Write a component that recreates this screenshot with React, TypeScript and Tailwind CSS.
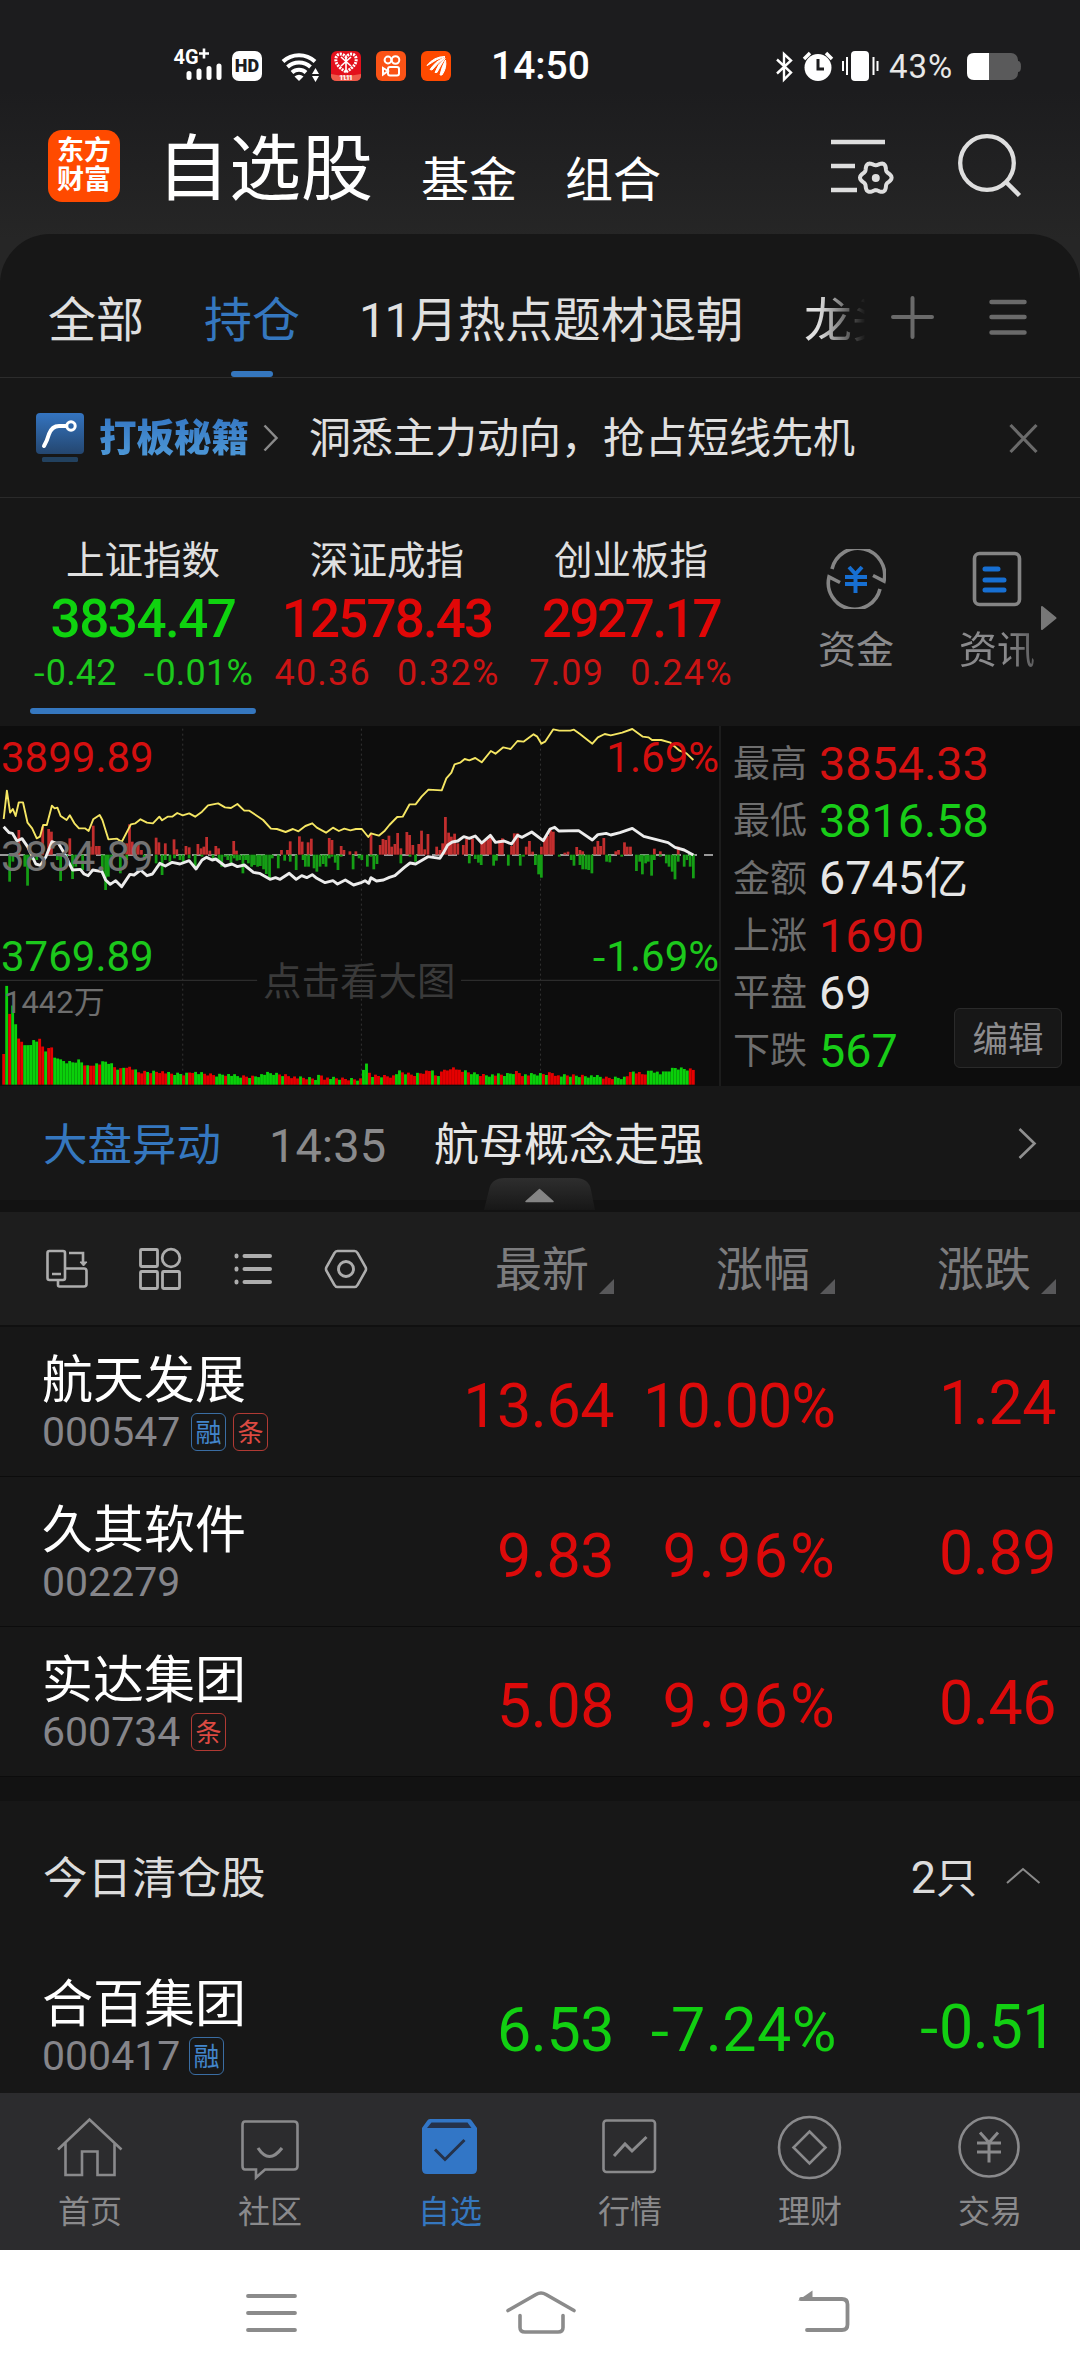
import React from 'react';

type Box = { x: number; y: number; w: number; h: number; className?: string; children: React.ReactNode };

/* Icon canvas: children are drawn in page units, offset by the box origin. */
function Ico({ x, y, w, h, className = '', children }: Box) {
  return (
    <svg width={w} height={h} viewBox={`${x} ${y} ${w} ${h}`} fill="none" className={`block shrink-0 ${className}`}>
      {children}
    </svg>
  );
}

/* Figures with a wide minus sign. */
function Num({ v }: { v: string }) {
  if (!v.startsWith('-')) return <>{v}</>;
  return (
    <>
      <span className="font-['Noto_Sans_CJK_SC',sans-serif] leading-[0]">-</span>
      {v.slice(1)}
    </>
  );
}

/* Six-lobed gear outline. */
const gear = Array.from({ length: 72 }, (_, i) => {
  const a = (i * Math.PI) / 36;
  const r = 14.1 + 1.7 * Math.cos(6 * a);
  return `${(875.8 + r * Math.cos(a)).toFixed(2)},${(177.7 + r * Math.sin(a)).toFixed(2)}`;
}).join(' ');

function StatusBar() {
  return (
    <div className="flex h-[110px] items-start pt-11">
      <Ico x={173} y={44} w={50} h={44} className="ml-[173px]">
        <text x="173.500" y="63.500" fontSize="20" fontWeight="700" fill="#fff" textLength="25" lengthAdjust="spacingAndGlyphs">4G</text>
        <path d="M199 53.500h10M204 48.500v10" stroke="#fff" strokeWidth="2.600" />
        <path d="M189 73.500v4M199 71v6.500M209 68.500v9M219 66v11.500" stroke="#fff" strokeWidth="5" strokeLinecap="round" />
      </Ico>
      <div className="mt-[7px] ml-[9px] flex h-[30px] w-[30px] items-center justify-center rounded-[7px] bg-white text-[18px] leading-none font-black text-[#1d1d1f]">HD</div>
      <Ico x={281} y={50} w={38} h={34} className="mt-1.5 ml-[19px]">
        <path d="M283 61.500a23.500 23.500 0 0 1 32 0M287.500 67a17 17 0 0 1 23 0M292 72.500a10.500 10.500 0 0 1 14 0" stroke="#fff" strokeWidth="4" />
        <path d="M299 81l-4.500-4.500q4.500-3.500 9 0z" fill="#fff" />
        <path d="M312 74l3.500-6 3.500 6zM312 76l3.500 6 3.500-6z" fill="#fff" />
      </Ico>
      <Ico x={331} y={51} w={30} h={30} className="mt-[7px] ml-3">
        <rect x="331" y="51" width="30" height="30" rx="6" fill="#e3101c" />
        <path d="M331 74q14 3 30 0v2q0 5-6 5h-18q-6 0-6-5z" fill="#ee5a4a" />
        <path d="M346 72c-8-5-11-9-10-14s7-5 10-1c3-4 9-4 10 1s-2 9-10 14z" stroke="#fff" strokeWidth="3" strokeDasharray="2 1" />
        <path d="M341 57l10 9M351 57l-10 9M346 58v12" stroke="#fff" strokeWidth="1.600" />
        <text x="339" y="80" fontSize="8" fontWeight="700" fill="#fff" textLength="14">11.11</text>
      </Ico>
      <Ico x={376} y={51} w={30} h={30} className="mt-[7px] ml-[15px]">
        <rect x="376" y="51" width="30" height="30" rx="6" fill="#fb5316" />
        <g stroke="#fff" strokeWidth="2">
          <circle cx="388" cy="60" r="3.400" />
          <circle cx="395.500" cy="60" r="3.800" />
          <rect x="388" y="67" width="11" height="8.500" rx="2" />
          <path d="M388 71l-5-3v6.500z" />
        </g>
      </Ico>
      <Ico x={421} y={51} w={30} h={30} className="mt-[7px] ml-[15px]">
        <rect x="421" y="51" width="30" height="30" rx="6" fill="#ff4a00" />
        <path d="M427 65.500q7-9 18-9-8 2-17 8.500zM430 69.500q6-9 15-12-7 5-13 12.500zM435 72.500q3-9 10-14-4 6-8 14zM440 75q2-9 5.500-15 1.500 8-3.500 15z" fill="#fff" stroke="#fff" strokeWidth="1" />
      </Ico>
      <div className="mt-[3px] ml-[40px] w-[100px] text-[39px] leading-[38px] font-medium text-white">14:50</div>
      <Ico x={773} y={48} w={106} h={36} className="mt-1 ml-[183px]">
        <path d="M776 59.500l14 13-7 7V54l7 6.500-14 13" stroke="#fff" strokeWidth="2.400" />
        <circle cx="817" cy="67.500" r="13.500" fill="#fff" />
        <path d="M803 59l6-6M831 59l-6-6" stroke="#fff" strokeWidth="3.500" />
        <path d="M817 59v10h6" stroke="#1d1d1f" strokeWidth="3" />
        <rect x="850" y="51" width="18" height="30" rx="4" fill="#fff" />
        <path d="M846 57v18M842 61v10M872.500 57v18M876.500 61v10" stroke="#fff" strokeWidth="2" />
      </Ico>
      <div className="mt-1 ml-[9px] w-[69px] text-[33px] leading-[38px] tracking-[1px] text-[#e8e8e8]">43%</div>
      <Ico x={966} y={53} w={55} h={28} className="mt-[9px] ml-[9px]">
        <rect x="966" y="53" width="51" height="27" rx="7" fill="#5a5a5b" />
        <path d="M1017 61q3 0 3 5.500t-3 5.500z" fill="#5a5a5b" />
        <path d="M988 53h-15q-7 0-7 7v13q0 7 7 7h15z" fill="#fff" />
      </Ico>
    </div>
  );
}

function TitleBar() {
  return (
    <div className="flex h-[124px] text-white">
      <div className="mt-5 ml-12 flex h-[72px] w-[72px] flex-col items-center justify-center rounded-[14px] bg-[#ff4a00] text-[27px] leading-[29px] font-bold">
        <span>东方</span>
        <span>财富</span>
      </div>
      <div className="mt-[25px] ml-[37px] w-[217px] text-[72px] leading-[70px]">自选股</div>
      <div className="mt-[47px] ml-[47px] text-[48px] leading-[48px]">基金</div>
      <div className="mt-[47px] ml-[48px] text-[48px] leading-[48px]">组合</div>
      <Ico x={830} y={130} w={68} h={70} className="mt-5 ml-[169px]">
        <path d="M831 142h54M831 166h24M831 190h26" stroke="#dedede" strokeWidth="4.500" />
        <polygon points={gear} stroke="#dedede" strokeWidth="4" strokeLinejoin="round" />
        <circle cx="875.800" cy="178" r="4" fill="#dedede" />
      </Ico>
      <Ico x={955} y={130} w={70} h={70} className="mt-5 ml-[57px]">
        <circle cx="987" cy="163" r="26.800" stroke="#dedede" strokeWidth="4.300" />
        <path d="M1006 182l13.500 13.500" stroke="#dedede" strokeWidth="4.500" />
      </Ico>
    </div>
  );
}

function Tabs() {
  return (
    <div className="flex h-[144px] border-b border-[#2c2c2c] text-[48px] leading-[48px] text-[#e0e0e0]">
      <div className="mt-[63px] ml-[48px]">全部</div>
      <div className="ml-[60px] flex flex-col items-center text-[#3577bf]">
        <div className="mt-[63px]">持仓</div>
        <div className="mt-[26px] h-1.5 w-[42px] rounded-[3px] bg-[#3577bf]" />
      </div>
      <div className="mt-[63px] ml-[59px] w-[388px] whitespace-nowrap"><span className="tracking-[-1.500px]">11</span><span className="text-[47.700px]">月热点题材退朝</span></div>
      <div className="mt-[63px] ml-[57px] w-[96px] whitespace-nowrap [mask-image:linear-gradient(90deg,#000_15%,transparent_64%)]">龙头</div>
      <Ico x={890} y={295} w={46} h={44} className="mt-[61px] ml-[-10px]">
        <path d="M893 317h39M912.500 298v39" stroke="#6a6a6a" strokeWidth="4" strokeLinecap="round" />
      </Ico>
      <Ico x={988} y={295} w={40} h={44} className="mt-[61px] ml-[52px]">
        <path d="M991.500 302h33M991.500 317h33M991.500 332.500h33" stroke="#6a6a6a" strokeWidth="4.500" strokeLinecap="round" />
      </Ico>
    </div>
  );
}

function Promo() {
  return (
    <div className="flex h-[120px] items-center border-b border-[#2a2a2a]">
      <Ico x={36} y={412} w={50} h={52} className="ml-9">
        <defs>
          <linearGradient id="promo" x1="0" y1="0" x2="0" y2="1">
            <stop offset="0" stopColor="#3474c0" />
            <stop offset="1" stopColor="#24466f" />
          </linearGradient>
        </defs>
        <rect x="36" y="413" width="48" height="41" rx="4" fill="url(#promo)" />
        <rect x="42" y="457" width="36" height="5" rx="1.500" fill="#22415f" />
        <path d="M44 446q3-5 5-12 3-8 10-8h7" stroke="#fff" strokeWidth="4" strokeLinecap="round" />
        <circle cx="71" cy="426" r="4.200" stroke="#fff" strokeWidth="3" />
      </Ico>
      <div className="ml-[13px] bg-linear-to-b from-[#3577c4] to-[#4f9ad8] bg-clip-text text-[37.500px] leading-[44px] font-black text-transparent">打板秘籍</div>
      <Ico x={262} y={422} w={18} h={32} className="ml-[13px]">
        <path d="M264.500 425.500l12 12.500-12 12.500" stroke="#8a8a8a" strokeWidth="2.500" />
      </Ico>
      <div className="mt-0.5 ml-[29px] w-[560px] text-[42px] leading-[44px] text-[#e0e0e0]">洞悉主力动向，抢占短线先机</div>
      <Ico x={1008} y={422} w={32} h={32} className="ml-[139px]">
        <path d="M1010.500 425l26 27M1036.500 425l-26 27" stroke="#6a6a6a" strokeWidth="3.200" />
      </Ico>
    </div>
  );
}

const indices = [
  { name: '上证指数', value: '3834.47', diff: '-0.42', pct: '-0.01%', up: false, fit: 'tracking-[-1.500px]' },
  { name: '深证成指', value: '12578.43', diff: '40.36', pct: '0.32%', up: true, fit: 'tracking-[-1.900px]' },
  { name: '创业板指', value: '2927.17', diff: '7.09', pct: '0.24%', up: true, fit: 'tracking-[-2.400px]' },
];

function Indices() {
  return (
    <div className="flex h-[228px]">
      <div className="ml-[21px] grid w-[732px] grid-cols-3">
        {indices.map((it, i) => (
          <div key={it.name} className={`flex flex-col items-center whitespace-nowrap ${it.up ? 'text-[#e00707]' : 'text-[#0fd30f]'}`}>
            <div className="mt-[43px] text-[38.500px] leading-[40px] text-[#e0e0e0]">{it.name}</div>
            <div className={`mt-[12px] text-[53px] leading-[52px] font-medium ${it.fit}`}>{it.value}</div>
            <div className={`mt-[8px] flex gap-[26px] text-[36px] leading-[40px] ${it.up ? 'tracking-[1.200px] text-[#cc1414]' : 'tracking-[0.200px] text-[#1cc81c]'}`}>
              <span><Num v={it.diff} /></span>
              <span><Num v={it.pct} /></span>
            </div>
            {i === 0 && <div className="mt-[15px] h-1.5 w-[226px] rounded-[3px] bg-[#3577bf]" />}
          </div>
        ))}
      </div>
      <div className="ml-[63px] flex w-[80px] flex-col items-center text-[38px] leading-[40px] text-[#8a8a8c]">
        <Ico x={826} y={549} w={60} h={60} className="mt-[51px]">
          <path d="M832 569a26 26 0 0 1 52 12l-11-5.500M880 589a26 26 0 0 1-51-12l11 5.500" stroke="#858585" strokeWidth="3.600" />
          <path d="M849 567l6.500 7 6.500-7M855.500 574v19M845 577h22M845 584h22" stroke="#176fd2" strokeWidth="4" />
        </Ico>
        <div className="mt-[21px]">资金</div>
      </div>
      <div className="ml-[61px] flex w-[80px] flex-col items-center text-[38px] leading-[40px] text-[#8a8a8c]">
        <Ico x={967} y={549} w={60} h={60} className="mt-[51px]">
          <rect x="974.500" y="553.500" width="45" height="51" rx="5" stroke="#858585" strokeWidth="3.600" />
          <path d="M985 569h13M985 580h19M985 590h19" stroke="#176fd2" strokeWidth="5" strokeLinecap="round" />
        </Ico>
        <div className="mt-[21px] [mask-image:linear-gradient(90deg,#000_60%,#0009_100%)]">资讯</div>
      </div>
      <Ico x={1040} y={604} w={18} h={28} className="mt-[106px] ml-[3px]">
        <path d="M1042 607l13.500 11-13.500 11z" fill="#777" stroke="#777" strokeWidth="2" strokeLinejoin="round" />
      </Ico>
    </div>
  );
}

const yellow =
  '8,327 15,242 22,308 28,297 34,318 41,277 50,277 60,338 70,355 80,385 87,380 94,345 102,345 113,287 119,295 125,293 132,318 145,330 152,316 162,340 172,355 185,355 193,363 203,328 217,315 223,330 236,388 255,386 265,396 285,343 295,340 306,328 320,338 333,340 347,320 353,331 365,320 375,320 386,309 398,316 412,310 425,320 440,305 453,286 475,280 490,292 503,294 517,282 532,302 543,302 560,318 573,330 590,356 603,357 622,366 638,357 650,364 665,348 680,340 690,353 710,368 725,353 738,363 750,356 763,361 775,357 788,357 802,381 808,370 825,377 838,362 848,345 865,321 877,320 892,283 905,283 918,260 933,239 962,241 972,205 983,188 990,163 1002,158 1012,147 1022,151 1035,144 1049,157 1069,123 1079,131 1096,112 1112,117 1127,93 1140,95 1162,73 1170,80 1179,101 1187,95 1205,58 1218,62 1242,62 1250,59 1263,72 1290,101 1302,82 1317,72 1330,76 1355,68 1377,57 1400,80 1412,82 1420,90 1440,90 1460,98 1470,110 1480,122 1495,130 1510,150';
const white =
  '8,350 20,368 27,370 37,393 48,386 60,410 78,462 88,466 100,440 113,395 128,402 140,430 158,480 175,478 183,492 192,497 202,480 222,485 230,510 240,523 252,512 265,530 283,493 292,495 306,480 320,497 332,492 348,460 360,468 375,457 392,462 412,452 427,477 440,450 450,442 462,450 470,447 490,468 505,462 517,470 532,465 552,487 565,490 588,508 600,503 610,508 630,490 645,508 657,497 668,503 680,494 690,505 708,518 725,512 735,522 752,510 770,525 788,517 795,512 803,520 808,503 820,513 835,510 848,502 860,497 880,473 893,459 905,462 920,450 932,440 958,445 965,430 975,405 985,396 997,393 1010,380 1022,385 1035,378 1049,399 1068,376 1079,397 1098,393 1114,402 1127,376 1137,382 1158,366 1183,392 1198,357 1208,352 1217,363 1260,362 1290,390 1302,374 1320,370 1330,375 1350,368 1377,355 1402,379 1455,398 1470,412 1490,420 1510,435';

const rises = '41:360 93:350 106:357 112:365 152:385 197:410 203:347 210:408 216:408 276:400 282:343 288:395 295:410 301:400 308:420 340:383 346:397 360:400 379:388 385:418 405:408 412:412 431:402 438:415 444:410 450:381 457:422 470:408 476:415 509:393 515:422 613:420 626:420 632:394 652:379 658:395 671:397 678:386 717:384 723:390 743:408 749:420 762:424 775:424 808:370 828:405 834:387 840:390 847:377 853:410 860:402 866:369 873:415 886:366 892:375 899:405 912:402 918:362 925:418 932:372 951:410 958:420 964:400 970:321 977:368 983:380 990:371 997:400 1009:405 1016:387 1029:386 1049:395 1055:390 1062:388 1068:380 1088:390 1094:385 1114:408 1120:370 1127:370 1146:410 1153:393 1160:425 1179:410 1186:385 1192:378 1199:360 1205:365 1230:428 1237:425 1256:411 1263:420 1269:424 1295:410 1302:393 1308:408 1315:384 1341:424 1347:420 1360:397 1366:410 1373:410 1425:416 1438:424 1477:410';
const falls = '21:515 28:455 54:470 60:527 67:450 80:450 125:450 132:513 145:455 158:507 165:470 180:480 223:490 230:540 236:500 243:450 262:490 276:450 314:450 340:460 353:495 360:450 370:455 380:445 392:450 399:460 412:445 425:475 440:440 464:452 477:455 483:470 490:440 496:450 503:467 510:445 516:452 522:450 529:490 535:450 541:460 548:470 554:465 561:470 567:468 574:478 580:492 587:505 593:445 606:475 620:452 632:455 645:480 660:450 665:470 672:470 684:475 690:485 697:470 704:462 710:470 717:445 723:440 730:458 736:480 743:440 769:478 782:445 788:450 800:470 808:440 814:478 821:462 873:460 893:440 905:455 1022:460 1035:447 1042:458 1048:465 1075:467 1081:452 1107:467 1133:467 1140:440 1166:465 1173:493 1179:503 1218:440 1244:450 1250:467 1263:465 1269:478 1276:478 1282:480 1289:490 1321:455 1328:457 1354:440 1386:483 1393:455 1399:493 1406:460 1412:455 1419:497 1425:450 1438:440 1451:460 1457:470 1464:485 1470:508 1477:455 1490:470 1496:450 1503:470 1510:505';
const toPairs = (s: string) => s.split(' ').map((p) => p.split(':').map(Number));

const envelope = toPairs('8:1032 15:813 21:912 28:885 34:942 41:988 47:995 54:1006 67:1005 73:990 80:995 86:985 93:1010 99:1025 106:1014 112:1010 119:1043 132:1048 145:1058 158:1058 171:1052 184:1062 192:1070 203:1062 216:1062 230:1056 240:1060 250:1072 262:1078 275:1068 287:1075 300:1088 320:1086 350:1084 370:1092 405:1092 418:1083 430:1090 470:1096 490:1092 520:1100 550:1100 585:1090 620:1095 650:1104 690:1106 697:1090 705:1104 750:1107 788:1107 795:1050 802:1085 810:1098 860:1098 866:1085 900:1095 918:1088 938:1080 950:1100 965:1085 970:1075 983:1082 990:1065 997:1080 1020:1088 1050:1095 1100:1095 1127:1085 1140:1095 1180:1093 1205:1088 1215:1098 1250:1097 1290:1098 1320:1104 1360:1102 1380:1085 1400:1093 1420:1080 1440:1092 1470:1074 1512:1078');
const runs = '1R 1G 1R 2G 2R 5G 2R 1G 2R 10G 1R 1G 2R 1G 1R 4G 1R 1G 1R 1G 3R 1G 3R 1G 1R 1G 4R 1G 1R 3G 1R 1G 2R 3G 4R 3G 1R 5G 2R 1G 1R 8G 1R 1G 5R 1G 2R 1G 1R 2G 3R 2G 1R 1G 3R 1G 1R 1G 1R 2G 1R 1G 2R 1G 4R 2G 1R 1G 3R 1G 4R 1G 1R 1G 8R 1G 1R 3G 2R 3G 1R 1G 1R 4G 3R 1G 1R 4G 1R 1G 4R 2G 1R 1G 1R 2G 1R 6G 4R 4G 2R 1G 4R 14G 2R 1G 1R 2G';
const volumeColors = runs.split(' ').flatMap((r) => Array.from({ length: parseInt(r, 10) }, () => (r.endsWith('R') ? '#e60000' : '#0ad00a')));

function volumeTop(x: number) {
  for (let i = 1; i < envelope.length; i++) {
    const [x0, y0] = envelope[i - 1];
    const [x1, y1] = envelope[i];
    if (x <= x1) return y0 + ((y1 - y0) * (x - x0)) / (x1 - x0);
  }
  return 1078;
}

const volumes = Array.from({ length: 231 }, (_, i) => {
  const x = 8 + i * 6.53;
  const jitter = i > 20 ? ((i * 37) % 11) - 5 : 0;
  return { x, top: volumeTop(x) + jitter, color: volumeColors[i] ?? '#0ad00a' };
});

const stats = [
  { label: '最高', value: '3854.33', color: 'text-[#d31111]' },
  { label: '最低', value: '3816.58', color: 'text-[#18cc18]' },
  { label: '金额', value: '6745亿', color: 'text-[#e6e6e6]' },
  { label: '上涨', value: '1690', color: 'text-[#d31111]' },
  { label: '平盘', value: '69', color: 'text-[#e6e6e6]' },
  { label: '下跌', value: '567', color: 'text-[#18cc18]' },
];

function Chart() {
  return (
    <div className="flex h-[360px] bg-[#0d0d0d]">
      <div className="relative w-[721px] shrink-0 border-r-2 border-[#1c1c1c] text-[42px] leading-[42px]">
        <svg width="720" height="360" viewBox="0 48 1568 1080" preserveAspectRatio="none" className="block">
          {[398, 787, 1177].map((x) => (
            <path key={x} d={`M${x} 56V1124`} stroke="#333" strokeWidth="1" strokeDasharray="2 3" vectorEffect="non-scaling-stroke" />
          ))}
          <path d="M0 811H560M1004 811H1568" stroke="#2c2c2c" strokeWidth="1.200" vectorEffect="non-scaling-stroke" fill="none" />
          <path d="M0 435H1568" stroke="#999" strokeWidth="2" strokeDasharray="9 7" vectorEffect="non-scaling-stroke" />
          {toPairs(rises).map(([x, y]) => (
            <rect key={x} x={x - 3} y={y} width="6" height={434 - y} fill="#c22e2e" />
          ))}
          {toPairs(falls).map(([x, y]) => (
            <rect key={x} x={x - 3} y={434} width="6" height={y - 434} fill="#159e15" />
          ))}
          {volumes.map((v) => (
            <rect key={v.x} x={v.x - 3.1} y={v.top} width="6.200" height={1124 - v.top} fill={v.color} />
          ))}
          <polyline points={white} fill="none" stroke="#ececec" strokeWidth="2.900" strokeLinejoin="round" vectorEffect="non-scaling-stroke" />
          <polyline points={yellow} fill="none" stroke="#f5e663" strokeWidth="1.900" strokeLinejoin="round" vectorEffect="non-scaling-stroke" />
        </svg>
        <div className="absolute top-[11px] left-px text-[#d40f0f]">3899.89</div>
        <div className="absolute top-[11px] right-0 text-[#d40f0f]">1.69%</div>
        <div className="absolute top-[110px] left-px text-[#737373]">3834.89</div>
        <div className="absolute top-[210px] left-px text-[#1cc81c]">3769.89</div>
        <div className="absolute top-[210px] right-0 text-[#1cc81c]"><Num v="-1.69%" /></div>
        <div className="absolute top-[261px] left-1 text-[31px] leading-[32px] text-[#6e6e6e]">1442万</div>
        <div className="absolute top-[236px] left-[263px] text-[38.500px] leading-[40px] text-[#3a3a3a]">点击看大图</div>
      </div>
      <div className="relative grow pt-[10px]">
        {stats.map((s) => (
          <div key={s.label} className="flex h-[57.300px] items-center">
            <div className="ml-3 w-[86px] pt-px text-[37px] leading-[40px] text-[#6e6e6e]">{s.label}</div>
            <div className={`text-[46.700px] leading-[47px] ${s.color}`}>
              {s.value.replace('亿', '')}
              {s.value.endsWith('亿') && <span className="text-[44px]">亿</span>}
            </div>
          </div>
        ))}
        <div className="absolute top-[282px] left-[233px] flex h-[60px] w-[108px] items-center justify-center rounded-md border border-[#2a2a2a] bg-[#171717] pt-1 text-[35.500px] leading-[36px] text-[#8c8c8e]">编辑</div>
      </div>
    </div>
  );
}

function News() {
  return (
    <div className="relative flex h-[114px] items-center text-[44.500px] leading-[46px]">
      <div className="mt-1.5 ml-[43px] w-[178px] text-[#3577bf]">大盘异动</div>
      <div className="mt-1.5 ml-[48px] text-[47px] text-[#8a8a8c]">14:35</div>
      <div className="mt-1.5 ml-[48px] text-[45px] text-[#e6e6e6]">航母概念走强</div>
      <Ico x={1016} y={1126} w={22} h={34} className="mr-[42px] ml-auto">
        <path d="M1019.500 1129l15 14.500-15 14.500" stroke="#8f8f8f" strokeWidth="2.600" />
      </Ico>
      <Ico x={484} y={1176} w={112} h={34} className="absolute top-[90px] left-[484px]">
        <defs>
          <linearGradient id="handle" x1="0" y1="0" x2="0" y2="1">
            <stop offset="0" stopColor="#2e2e2e" />
            <stop offset="1" stopColor="#171717" />
          </linearGradient>
        </defs>
        <path d="M484 1210l5-20q2-12 16-12h70q14 0 16 12l4 20z" fill="url(#handle)" />
        <path d="M539.500 1189.500l13.500 12h-27z" fill="#858585" stroke="#858585" strokeWidth="1.500" strokeLinejoin="round" />
      </Ico>
    </div>
  );
}

function Toolbar() {
  return (
    <div className="flex h-[115px] items-center border-b-2 border-[#101010] bg-[#1d1d1d] text-[47px] leading-[48px] text-[#7c7c7e]">
      <Ico x={44} y={1246} w={46} h={46} className="ml-11">
        <g stroke="#adadad" strokeWidth="2.600">
          <rect x="47.500" y="1251" width="17.500" height="29" rx="2" />
          <path d="M52 1274h9M58 1280v5q0 1.500 1.500 1.500H84q2.500 0 2.500-2.500v-13q0-2.500-2.500-2.500H66M69 1253h14v10" />
          <path d="M80 1262h7l-3.500 4z" fill="#adadad" strokeWidth="1" />
        </g>
      </Ico>
      <Ico x={137} y={1246} w={46} h={46} className="ml-[47px]">
        <g stroke="#adadad" strokeWidth="2.800">
          <rect x="140.500" y="1249.500" width="17" height="17" rx="1" />
          <circle cx="171" cy="1258" r="8.800" />
          <rect x="140.500" y="1271.500" width="17" height="17" rx="1" />
          <rect x="162.500" y="1271.500" width="17" height="17" rx="1" />
        </g>
      </Ico>
      <Ico x={230} y={1246} w={46} h={46} className="ml-[47px]">
        <path d="M244.500 1256h25.500M244.500 1269h25.500M244.500 1282h25.500M236.500 1255.500v1M236.500 1268.500v1M236.500 1281.500v1" stroke="#adadad" strokeWidth="4" strokeLinecap="round" />
      </Ico>
      <Ico x={323} y={1246} w={46} h={46} className="ml-[47px]">
        <path d="M337.500 1251h17q2 0 3 2l8 14q1 2 0 4l-8 14q-1 2-3 2h-17q-2 0-3-2l-8-14q-1-2 0-4l8-14q1-2 3-2z" stroke="#adadad" strokeWidth="2.600" />
        <circle cx="346" cy="1269" r="7.500" stroke="#adadad" strokeWidth="2.900" />
      </Ico>
      <div className="mr-[25px] ml-auto grid grid-cols-[221px_221px_118px] pt-0.5">
        {['最新', '涨幅', '涨跌'].map((t) => (
          <div key={t} className="flex">
            <span>{t}</span>
            <Ico x={0} y={0} w={15} h={15} className="mt-[33px] ml-[10px]">
              <path d="M15 0v15H0z" fill="#58585a" />
            </Ico>
          </div>
        ))}
      </div>
    </div>
  );
}

type Stock = { name: string; code: string; tags: string[]; price: string; pct: string; diff: string; up: boolean; fit: string };

const holdings: Stock[] = [
  { name: '航天发展', code: '000547', tags: ['融', '条'], price: '13.64', pct: '10.00%', diff: '1.24', up: true, fit: 'tracking-[-1px]' },
  { name: '久其软件', code: '002279', tags: [], price: '9.83', pct: '9.96%', diff: '0.89', up: true, fit: 'tracking-[2.200px] -mr-[2px]' },
  { name: '实达集团', code: '600734', tags: ['条'], price: '5.08', pct: '9.96%', diff: '0.46', up: true, fit: 'tracking-[2.200px] -mr-[2px]' },
];
const cleared: Stock = { name: '合百集团', code: '000417', tags: ['融'], price: '6.53', pct: '-7.24%', diff: '-0.51', up: false, fit: 'tracking-[0.500px] -mr-[2px]' };

function StockRow({ s, className = '' }: { s: Stock; className?: string }) {
  return (
    <div className={`flex overflow-hidden ${className}`}>
      <div className="ml-[42px] w-[351px]">
        <div className="mt-[28px] text-[51px] leading-[52px] text-white">{s.name}</div>
        <div className="mt-[6px] flex h-[38px] items-center gap-[7px] text-[41px] leading-[40px] text-[#85858a]">
          <span className={s.up ? 'w-[142px]' : 'w-[140px]'}>{s.code}</span>
          {s.tags.map((t) => (
            <span
              key={t}
              className={`flex h-[38px] w-[35px] items-center justify-center rounded-md border-[1.500px] pt-px text-[26px] leading-[26px] ${t === '融' ? 'border-[#3a6da3] text-[#4285cb]' : 'border-[#b03a34] text-[#dc4a42]'}`}
            >
              {t}
            </span>
          ))}
        </div>
      </div>
      <div className={`flex grow text-right text-[61px] leading-[60px] tracking-[-0.500px] ${s.up ? 'text-[#dc0a0a]' : 'text-[#12cf12]'}`}>
        <div className="mt-[49px] w-[221px]">{s.price}</div>
        <div className="mt-[49px] w-[221px]">
          <div className={s.fit}><Num v={s.pct} /></div>
        </div>
        <div className="mt-[46px] w-[221px]"><Num v={s.diff} /></div>
      </div>
    </div>
  );
}

function BottomNav() {
  const g = '#8a8a8c';
  const items = [
    {
      label: '首页',
      icon: (
        <Ico x={55} y={2112} w={70} h={70}>
          <path d="M58 2149.500L89.500 2119.500 121.500 2149.500M65.500 2143v32H82v-23.500h15.500V2175h17v-32" stroke={g} strokeWidth="2.600" />
        </Ico>
      ),
    },
    {
      label: '社区',
      icon: (
        <Ico x={235} y={2112} w={70} h={70}>
          <path d="M245 2121.500h49q3.500 0 3.500 3.500v41q0 3.500-3.500 3.500H265l-9 8v-8h-11q-2.500 0-2.500-3.500v-41q0-3.500 2.500-3.500z" stroke={g} strokeWidth="2.600" />
          <path d="M258 2148q11 17 24 0" stroke={g} strokeWidth="3.200" />
        </Ico>
      ),
    },
    {
      label: '自选',
      active: true,
      icon: (
        <Ico x={415} y={2112} w={70} h={70}>
          <path d="M430 2119h39q2 0 3 2l5 7v41q0 5-5 5h-45q-5 0-5-5v-41l5-7q1-2 3-2z" fill="#3276c6" />
          <path d="M431.500 2122.500h36l4 5.500H427z" fill="#25324a" />
          <path d="M435 2149.500l10 10 19.500-19.500" stroke="#25324a" strokeWidth="3" />
        </Ico>
      ),
    },
    {
      label: '行情',
      icon: (
        <Ico x={595} y={2112} w={70} h={70}>
          <rect x="603.500" y="2120.500" width="51.500" height="51.500" rx="3" stroke={g} strokeWidth="2.600" />
          <path d="M614 2156l11-12 7 7 14.500-14" stroke={g} strokeWidth="3" />
        </Ico>
      ),
    },
    {
      label: '理财',
      icon: (
        <Ico x={775} y={2112} w={70} h={70}>
          <circle cx="809.500" cy="2147.500" r="30.500" stroke={g} strokeWidth="2.600" />
          <path d="M809.500 2131.500l16 16-16 16-16-16z" stroke={g} strokeWidth="2.600" />
        </Ico>
      ),
    },
    {
      label: '交易',
      icon: (
        <Ico x={955} y={2112} w={70} h={70}>
          <circle cx="989" cy="2147" r="29.500" stroke={g} strokeWidth="2.600" />
          <path d="M980 2132.500l9 10 9-10M989 2142v20.500M977 2143h24M977 2152h24" stroke={g} strokeWidth="3" />
        </Ico>
      ),
    },
  ];
  return (
    <div className="grid h-[157px] grid-cols-6 bg-[#2c2c2e] text-[32px] leading-[34px] text-[#8a8a8c]">
      {items.map((it) => (
        <div key={it.label} className={`flex flex-col items-center pt-[19px] ${it.active ? 'text-[#3577bf]' : ''}`}>
          {it.icon}
          <div className="mt-[13px]">{it.label}</div>
        </div>
      ))}
    </div>
  );
}

function SystemNav() {
  return (
    <div className="flex h-[126px] items-center bg-white">
      <Ico x={240} y={2280} w={62} h={66} className="ml-[240px]">
        <path d="M248 2296h47M248 2313h47M248 2330h47" stroke="#8b8b8b" strokeWidth="3.800" strokeLinecap="round" />
      </Ico>
      <Ico x={503} y={2280} w={76} h={66} className="ml-[201px]">
        <path d="M508 2310.500L536 2294.500q5-3 10 0L574 2310.500M520 2315.500v12q0 4.500 5 4.500h33q5 0 5-4.500v-12" stroke="#8b8b8b" strokeWidth="3.600" strokeLinecap="round" />
      </Ico>
      <Ico x={795} y={2280} w={60} h={66} className="ml-[216px]">
        <path d="M801 2299h41q5.500 0 5.500 5.500v20q0 5.500-5.500 5.500h-35" stroke="#8b8b8b" strokeWidth="3.800" strokeLinecap="round" />
        <path d="M798 2300.500l14.500-10v10z" fill="#8b8b8b" />
      </Ico>
    </div>
  );
}

export default function App() {
  return (
    <div className="h-[2376px] w-[1080px] overflow-hidden bg-[#171717] font-['Roboto','Noto_Sans_CJK_SC',sans-serif] whitespace-nowrap">
      <div className="bg-[linear-gradient(180deg,#1c1c1e_90px,#262626_240px)]">
        <StatusBar />
        <TitleBar />
        <div className="rounded-t-[50px] bg-[#171717]">
          <Tabs />
        </div>
      </div>
      <Promo />
      <Indices />
      <Chart />
      <News />
      <div className="h-3 bg-[#121212]" />
      <Toolbar />
      {holdings.map((s) => (
        <StockRow key={s.code} s={s} className="h-[150px] border-b border-[#0c0c0c]" />
      ))}
      <div className="h-6 bg-[#121212]" />
      <div className="flex h-[150px] items-center text-[44.500px] leading-[46px] text-[#dcdcdc]">
        <div className="mt-1.5 ml-[43px]">今日清仓股</div>
        <div className="ml-auto flex items-center">
          <span className="mt-1 text-[41px]"><span className="text-[45px]">2</span>只</span>
          <Ico x={1004} y={1864} w={38} h={22} className="mr-[38px] ml-[27px]">
            <path d="M1007 1882l16-14 16.500 14" stroke="#8a8a8a" strokeWidth="2" />
          </Ico>
        </div>
      </div>
      <StockRow s={cleared} className="h-[142px]" />
      <BottomNav />
      <SystemNav />
    </div>
  );
}
